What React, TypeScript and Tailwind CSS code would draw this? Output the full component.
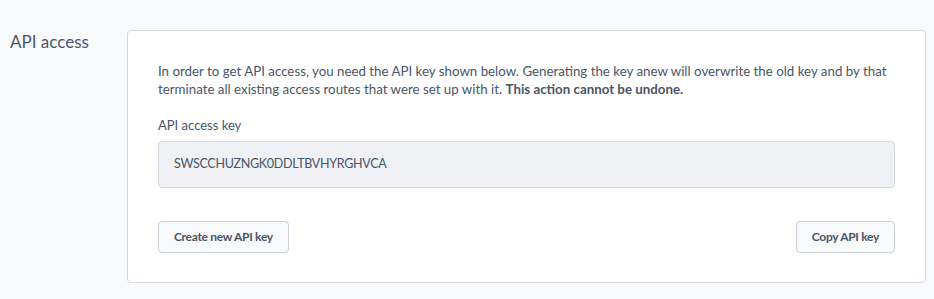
export default function App() {
  return (
    <div
      className="min-h-screen w-full bg-[#f8f9fb] text-[#4a5568]"
      style={{ fontFamily: 'Lato, "Noto Sans", sans-serif' }}
    >
      <div className="flex items-start pt-[30px] pl-[10px] pr-[8px]">
        <h2 className="w-[117px] shrink-0 text-[17px] leading-[24px] text-[#4a5568]">
          API access
        </h2>
        <section className="flex-1 rounded-[4px] border border-[#d3d9e0] bg-white px-[30px] pt-[31px] pb-[29px]">
          <p className="text-[13.3px] leading-[18px]">
            In order to get API access, you need the API key shown below. Generating the key anew will
            overwrite the old key and by that terminate all existing access routes that were set up
            with it. <strong className="font-bold">This action cannot be undone.</strong>
          </p>

          <label className="mt-[18px] block text-[13px] leading-[18px]">API access key</label>
          <div className="mt-[7px] flex h-[47px] items-center rounded-[4px] border border-[#d3d9e0] bg-[#eff1f5] px-[15px] text-[12.5px] tracking-[-0.3px]">
            SWSCCHUZNGK0DDLTBVHYRGHVCA
          </div>

          <div className="mt-[33px] flex items-center justify-between">
            <button className="h-[32px] rounded-[4px] border border-[#c9d0d8] bg-[#f8f9fb] px-[15px] text-[12px] font-bold tracking-[-0.3px] text-[#4a5568]">
              Create new API key
            </button>
            <button className="h-[32px] rounded-[4px] border border-[#c9d0d8] bg-[#f8f9fb] px-[15px] text-[12px] font-bold tracking-[-0.3px] text-[#4a5568]">
              Copy API key
            </button>
          </div>
        </section>
      </div>
    </div>
  );
}
